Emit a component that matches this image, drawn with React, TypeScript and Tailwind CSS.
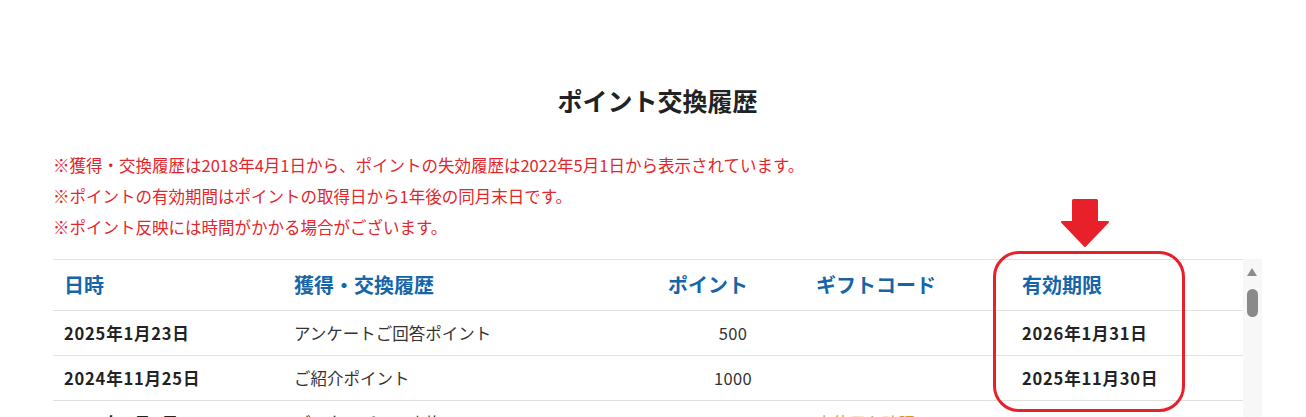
const notes = [
  '※獲得・交換履歴は2018年4月1日から、ポイントの失効履歴は2022年5月1日から表示されています。',
  '※ポイントの有効期間はポイントの取得日から1年後の同月末日です。',
  '※ポイント反映には時間がかかる場合がございます。',
];

type Row = { date: string; detail: string; point: string; code?: string; expire: string };

const rows: Row[] = [
  { date: '2025年1月23日', detail: 'アンケートご回答ポイント', point: '500', expire: '2026年1月31日' },
  { date: '2024年11月25日', detail: 'ご紹介ポイント', point: '1000', expire: '2025年11月30日' },
  { date: '2024年7月1日', detail: 'デジタルギフト交換', point: '-500', code: '未使用を確認', expire: '' },
];

const cols = 'grid grid-cols-[230px_317px_205px_206px_232px]';

export default function App() {
  return (
    <div
      className="w-[1306px] h-[417px] overflow-hidden bg-white text-[#333]"
      style={{ fontFamily: '"Noto Sans CJK JP", "Noto Sans", sans-serif' }}
    >
      <div className="ml-[53px] w-[1209px]">
        <h1 className="pt-[84px] text-center text-[25px] leading-[32px] font-bold text-[#222]">
          ポイント交換履歴
        </h1>

        <div className="mt-[34px] text-[16.5px] leading-[31px] text-[#e3262d]">
          {notes.map((n) => (
            <p key={n}>{n}</p>
          ))}
        </div>

        <div className="mt-[16px] flex">
          <div className="relative w-[1190px] border-t border-[#e0e0e0]">
            <div className={`${cols} h-[51px] items-center border-b border-[#e0e0e0] text-[20px] font-bold text-[#1565a8]`}>
              <div className="pl-[11px]">日時</div>
              <div className="pl-[11px]">獲得・交換履歴</div>
              <div className="pr-[57px] text-right">ポイント</div>
              <div className="pl-[11px]">ギフトコード</div>
              <div className="pl-[11px]">有効期限</div>
            </div>

            {rows.map((r) => (
              <div
                key={r.date}
                className={`${cols} h-[45px] items-center border-b border-[#e0e0e0] text-[16.5px]`}
              >
                <div className="pl-[11px] font-bold tracking-[0.8px] text-[#222]">{r.date}</div>
                <div className="pl-[11px]">{r.detail}</div>
                <div className="flex justify-end pr-[42px]">
                  <span className="w-[60px] text-center tracking-[0.4px]">{r.point}</span>
                </div>
                <div className="pl-[11px] text-[#d99a06]">{r.code}</div>
                <div className="pl-[11px] font-bold tracking-[0.8px] text-[#222]">{r.expire}</div>
              </div>
            ))}

            {/* highlight overlay */}
            <div className="absolute left-[940px] top-[-9px] h-[161px] w-[192px] rounded-[26px] border-[3px] border-[#e8202a]" />
            <svg
              className="absolute left-[1008px] top-[-61px]"
              width="48"
              height="48"
              viewBox="0 0 48 48"
            >
              <rect x="11" y="0" width="26" height="24" rx="1.5" fill="#e8202a" />
              <path d="M1 23 L47 23 L24 47 Z" fill="#e8202a" strokeLinejoin="round" stroke="#e8202a" strokeWidth="2" />
            </svg>
          </div>

          {/* scrollbar */}
          <div className="relative h-[170px] w-[19px] bg-[#f7f7f7]">
            <div className="absolute left-[4px] top-[9px] h-0 w-0 border-x-[5px] border-b-[8px] border-x-transparent border-b-[#8c8c8c]" />
            <div className="absolute left-[4px] top-[30px] h-[28px] w-[11px] rounded-full bg-[#8a8a8a]" />
          </div>
        </div>
      </div>
    </div>
  );
}
